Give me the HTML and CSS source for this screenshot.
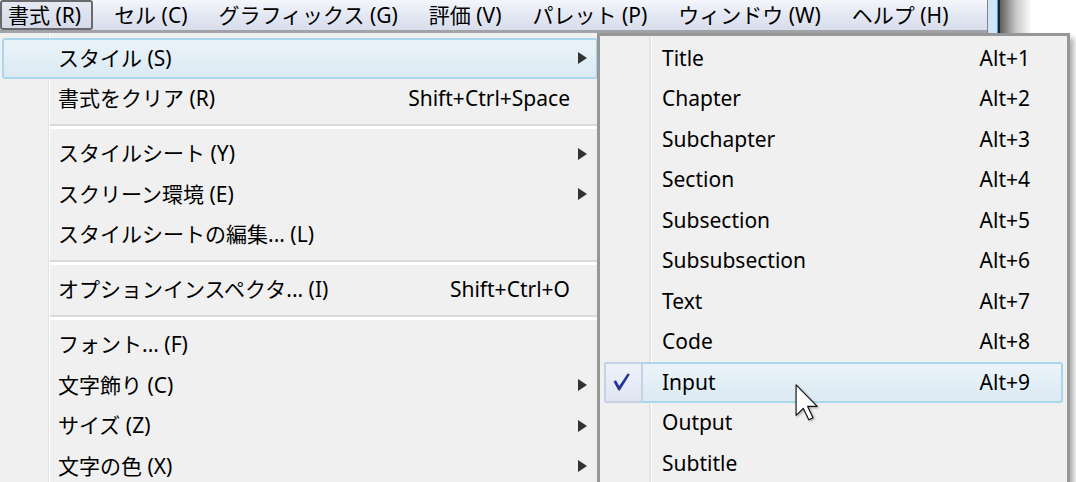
FILE: index.html
```html
<!DOCTYPE html>
<html lang="ja">
<head>
  <meta charset="UTF-8" />
  <title>書式メニュー</title>
  <link rel="stylesheet" href="styles.css">
</head>
<body>

  <div class="top">
    <div class="menubar">
      <div class="bar-item pressed">書式 (R)</div>
      <div class="bar-item">セル (C)</div>
      <div class="bar-item">グラフィックス (G)</div>
      <div class="bar-item">評価 (V)</div>
      <div class="bar-item">パレット (P)</div>
      <div class="bar-item">ウィンドウ (W)</div>
      <div class="bar-item">ヘルプ (H)</div>
    </div>
    <div class="frame"></div>
    <div class="frame-shade"></div>
  </div>

  <!-- 書式 dropdown -->
  <div class="menu main-menu">
    <div class="row active"><span class="label">スタイル (S)</span><span class="more"></span></div>
    <div class="row"><span class="label">書式をクリア (R)</span><span class="key">Shift+Ctrl+Space</span></div>
    <div class="sep"></div>
    <div class="row"><span class="label">スタイルシート (Y)</span><span class="more"></span></div>
    <div class="row"><span class="label">スクリーン環境 (E)</span><span class="more"></span></div>
    <div class="row"><span class="label">スタイルシートの編集... (L)</span></div>
    <div class="sep"></div>
    <div class="row"><span class="label">オプションインスペクタ... (I)</span><span class="key">Shift+Ctrl+O</span></div>
    <div class="sep"></div>
    <div class="row"><span class="label">フォント... (F)</span></div>
    <div class="row"><span class="label">文字飾り (C)</span><span class="more"></span></div>
    <div class="row"><span class="label">サイズ (Z)</span><span class="more"></span></div>
    <div class="row"><span class="label">文字の色 (X)</span><span class="more"></span></div>
  </div>

  <!-- スタイル submenu -->
  <div class="menu sub-menu">
    <div class="row"><span class="check"></span><span class="label">Title</span><span class="key">Alt+1</span></div>
    <div class="row"><span class="check"></span><span class="label">Chapter</span><span class="key">Alt+2</span></div>
    <div class="row"><span class="check"></span><span class="label">Subchapter</span><span class="key">Alt+3</span></div>
    <div class="row"><span class="check"></span><span class="label">Section</span><span class="key">Alt+4</span></div>
    <div class="row"><span class="check"></span><span class="label">Subsection</span><span class="key">Alt+5</span></div>
    <div class="row"><span class="check"></span><span class="label">Subsubsection</span><span class="key">Alt+6</span></div>
    <div class="row"><span class="check"></span><span class="label">Text</span><span class="key">Alt+7</span></div>
    <div class="row"><span class="check"></span><span class="label">Code</span><span class="key">Alt+8</span></div>
    <div class="row active">
      <span class="check">
        <svg width="17" height="18" viewBox="0 0 17 18"><path d="M0.5 8.5 L3 7.2 L6.2 13 L14.8 0.3 L16.8 1.4 L6.8 17.6 L5.4 17.6 Z" fill="#22359c"/></svg>
      </span>
      <span class="label">Input</span><span class="key">Alt+9</span>
    </div>
    <div class="row"><span class="check"></span><span class="label">Output</span></div>
    <div class="row"><span class="check"></span><span class="label">Subtitle</span></div>
  </div>

  <svg class="cursor" width="24" height="37" viewBox="0 0 12.5 19.5">
    <polygon points="0.5,0.5 0.5,16.5 4.3,12.8 7.2,18.8 9.4,17.8 6.6,11.8 11.6,11.8" fill="#fff" stroke="#111" stroke-width="0.6" stroke-linejoin="round"/>
  </svg>

</body>
</html>
```

FILE: styles.css
```css
* { margin: 0; padding: 0; box-sizing: border-box; }
body {
  width: 1076px;
  height: 482px;
  overflow: hidden;
  position: relative;
  background: #fff;
  font-family: "Noto Sans", "Noto Sans CJK JP", sans-serif;
  font-size: 21px;
  color: #000;
}

/* menu bar + window edge */
.top { display: flex; height: 33px; }
.menubar {
  width: 987px;
  display: flex;
  gap: 13px;
  background: linear-gradient(#f4f6fb, #e4e8f3 50%, #d8ddeb);
  border-bottom: 3px solid #a2a3a9;
}
.bar-item { display: flex; align-items: center; padding: 0 10px 0 8px; line-height: 1; white-space: nowrap; }
.bar-item.pressed {
  padding-left: 6px;
  border: 2px solid #6a6a6e;
  border-radius: 3px;
  background: linear-gradient(#e6e9f2, #d5dae8);
}
.frame {
  width: 13px;
  background: #d2e5f5;
  border-left: 1px solid #7c8390;
  border-right: 2px solid #1c232c;
  box-shadow: inset -1px 0 #3b9fe2;
}
.frame-shade { width: 32px; background: linear-gradient(to right, #5e5e5e, #c8c8c8 50%, #fff); }

/* popup menus */
.menu { position: absolute; top: 33px; background: #f0f0f0; }
.main-menu {
  left: 0;
  width: 600px;
  height: 449px;
  padding: 5px 2px 0 2px;
  background: linear-gradient(to right, #f0f0f0 48px, #e2e3e3 48px, #e2e3e3 49px, #fff 49px, #fff 50px, #f0f0f0 50px);
}
.sub-menu {
  left: 597px;
  width: 473px;
  height: 460px;
  padding: 2px 4px 0 4px;
  border: 3px solid #979797;
  border-bottom: none;
  box-shadow: 4px 5px 5px rgba(0, 0, 0, 0.3);
  background: linear-gradient(to right, #f0f0f0 49px, #e2e3e3 49px, #e2e3e3 51px, #fff 51px, #fff 52px, #f0f0f0 52px);
}

.row { height: 40.5px; display: flex; align-items: center; line-height: 1; white-space: nowrap; }
.row .label { flex: 1; }
.row.active {
  border-radius: 3px;
  background: linear-gradient(#ecf4f9, #dae9f3);
  box-shadow: inset 0 0 0 2px #aad7ed;
}

.main-menu .row { padding-left: 56px; }
.main-menu .key { margin-right: 28px; }
.more { width: 28px; padding-left: 8px; display: flex; }
.more::after {
  content: "";
  border-left: 9px solid #333;
  border-top: 6px solid transparent;
  border-bottom: 6px solid transparent;
}

.sep { height: 14.5px; margin-left: 48px; display: flex; align-items: center; }
.sep::after { content: ""; flex: 1; height: 3px; border-top: 2px solid #dadada; background: #fff; }

.sub-menu .label { margin-left: 19px; }
.sub-menu .key { margin-right: 33px; }
.check { width: 39px; align-self: stretch; display: flex; align-items: center; justify-content: center; }
.row.active .check {
  border: 2px solid #c7d2e7;
  border-radius: 3px;
  background: linear-gradient(#eef2f9, #dfe6f2);
  padding-right: 4px;
}

.cursor { position: absolute; left: 795px; top: 384px; filter: drop-shadow(1px 1px 1px rgba(0, 0, 0, 0.35)); }
```
